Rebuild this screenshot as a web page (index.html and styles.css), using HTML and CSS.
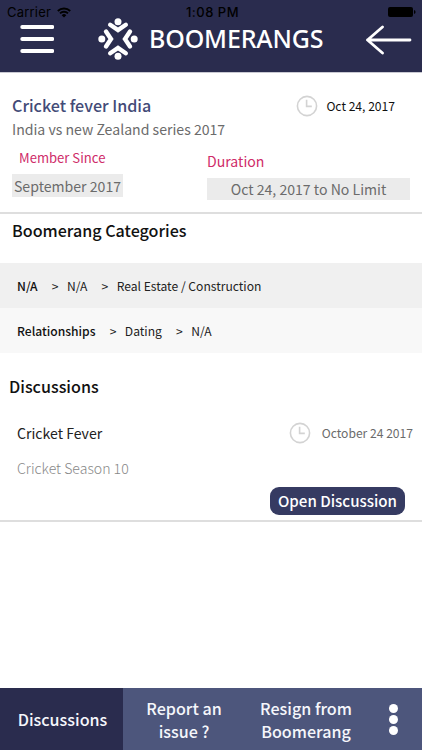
FILE: index.html
```html
<!DOCTYPE html>
<html lang="en">
<head>
    <meta charset="UTF-8">
    <meta name="viewport" content="width=device-width, initial-scale=1.0">
    <title>Boomerangs</title>
    <link rel="stylesheet" href="styles.css">
</head>
<body>
<header class="header">
    <div class="status-bar">
        <div class="carrier">
            <span>Carrier</span>
            <svg class="wifi" width="14" height="11" viewBox="0 0 14 11" fill="none" stroke="#000" stroke-width="1.9">
                <path d="M.8 4a8.8 8.8 0 0 1 12.4 0"/>
                <path d="M3 6.4a5.6 5.6 0 0 1 8 0"/>
                <path d="M7 10.6L4.7 8.3a3.2 3.2 0 0 1 4.6 0z" fill="#000" stroke="none"/>
            </svg>
        </div>
        <span class="time">1:08 PM</span>
        <svg class="battery" width="28" height="10" viewBox="0 0 28 10">
            <rect x="0" y="0" width="25" height="10" rx="2" fill="#000"/>
            <path d="M26 3v4q1.6-.6 1.6-2T26 3z" fill="#000"/>
        </svg>
    </div>
    <div class="nav-bar">
        <svg class="menu-icon" width="34" height="30" viewBox="0 0 34 30" stroke="#fff" stroke-width="3.8" stroke-linecap="round">
            <path d="M2.2 3h30.2M2.2 15h30.2M2.2 27h30.2"/>
        </svg>
        <div class="brand">
            <svg class="logo" width="40" height="42" viewBox="-20 -21 40 42">
                <g fill="none" stroke="#fff" stroke-width="4.4" stroke-linecap="round" stroke-linejoin="miter">
                    <path d="M-7.8 -14.2L0 -8.9L7.8 -14.2"/>
                    <path d="M-7.8 14.2L0 8.9L7.8 14.2"/>
                    <path d="M-12 -7.4L-7 0L-12 7.4"/>
                    <path d="M12 -7.4L7 0L12 7.4"/>
                </g>
                <g fill="#fff">
                    <circle cx="0" cy="-17.2" r="3.5"/>
                    <circle cx="0" cy="17.2" r="3.5"/>
                    <circle cx="-16.2" cy="0" r="3.5"/>
                    <circle cx="16.2" cy="0" r="3.5"/>
                </g>
            </svg>
            <h1>BOOMERANGS</h1>
        </div>
        <svg class="back-icon" width="46" height="30" viewBox="0 0 46 30" fill="none" stroke="#fff" stroke-width="2.8" stroke-linecap="round" stroke-linejoin="round">
            <path d="M44 15H1.5M16.5 2L1.5 15l15 13"/>
        </svg>
    </div>
</header>

<main class="content">
    <section class="summary">
        <div class="summary-top">
            <h2>Cricket fever India</h2>
            <div class="date">
                <svg class="clock" width="22" height="22" viewBox="0 0 22 22" fill="none" stroke="#d3d3d3" stroke-width="1.6">
                    <circle cx="11" cy="11" r="9.6"/>
                    <path d="M10.6 4.8v6.6h5.2"/>
                </svg>
                <span>Oct 24, 2017</span>
            </div>
        </div>
        <p class="subtitle">India vs new Zealand series 2017</p>
        <div class="details">
            <div class="member">
                <span class="label">Member Since</span>
                <span class="value">September 2017</span>
            </div>
            <div class="duration">
                <span class="label">Duration</span>
                <span class="value">Oct 24, 2017 to No Limit</span>
            </div>
        </div>
    </section>

    <section class="categories">
        <h3>Boomerang Categories</h3>
        <div class="category">
            <b>N/A</b><i>&gt;</i><span>N/A</span><i>&gt;</i><span>Real Estate / Construction</span>
        </div>
        <div class="category light">
            <b>Relationships</b><i>&gt;</i><span>Dating</span><i>&gt;</i><span>N/A</span>
        </div>
    </section>

    <section class="discussions">
        <h3>Discussions</h3>
        <div class="discussion-top">
            <span class="discussion-title">Cricket Fever</span>
            <div class="date muted">
                <svg class="clock" width="22" height="22" viewBox="0 0 22 22" fill="none" stroke="#d3d3d3" stroke-width="1.6">
                    <circle cx="11" cy="11" r="9.6"/>
                    <path d="M10.6 4.8v6.6h5.2"/>
                </svg>
                <span>October 24 2017</span>
            </div>
        </div>
        <p class="discussion-text">Cricket Season 10</p>
        <button class="open-btn">Open Discussion</button>
    </section>
</main>

<footer class="tabs">
    <a class="tab active">Discussions</a>
    <a class="tab">Report an<br>issue ?</a>
    <a class="tab">Resign from<br>Boomerang</a>
    <div class="more">
        <span></span>
        <span></span>
        <span></span>
    </div>
</footer>
</body>
</html>
```
FILE: styles.css
```css
:root {
    --navy: #2a2c4e;
    --navy-light: #4d567c;
    --pink: #cf2c69;
    --line: #dedede;
}

* {
    margin: 0;
    padding: 0;
    box-sizing: border-box;
}

body {
    height: 750px;
    display: flex;
    flex-direction: column;
    overflow: hidden;
    background: #fff;
    font-family: 'Noto Sans CJK SC', 'Open Sans', sans-serif;
    white-space: nowrap;
}

/* header */
.header {
    height: 73px;
    background: var(--navy);
    border-bottom: 1px solid #c9c9d2;
}

.status-bar {
    height: 24px;
    padding: 0 6px 0 7px;
    display: grid;
    grid-template-columns: 1fr auto 1fr;
    align-items: center;
    font-family: Inter, 'Liberation Sans', sans-serif;
    font-size: 13px;
    line-height: 24px;
    letter-spacing: 0.2px;
    color: #000;
}

.carrier {
    display: flex;
    align-items: center;
    gap: 6px;
}

.time {
    padding-left: 2px;
    font-weight: 500;
    letter-spacing: 0.5px;
}

.battery {
    justify-self: end;
}

.nav-bar {
    height: 30px;
    padding: 0 10px 0 20px;
    display: flex;
    align-items: center;
}

.brand {
    display: flex;
    align-items: center;
    gap: 11px;
    margin-left: 44px;
}

.brand h1 {
    margin-top: -2px;
    font-family: 'Noto Sans', 'Open Sans', sans-serif;
    font-size: 25px;
    font-weight: 500;
    line-height: 30px;
    letter-spacing: -0.15px;
    color: #fff;
}

.back-icon {
    margin-left: auto;
    margin-top: 2px;
}

/* summary */
.content {
    flex: 1;
}

.summary {
    height: 141px;
    padding: 21px 12px 0 12px;
    border-bottom: 2px solid var(--line);
}

.summary-top,
.discussion-top {
    display: flex;
    justify-content: space-between;
    align-items: center;
    height: 24px;
}

.summary h2 {
    margin-top: -2px;
    font-size: 16.1px;
    font-weight: 500;
    color: #434b77;
}

.date {
    display: flex;
    align-items: center;
    gap: 8px;
    font-size: 12.1px;
    color: #111;
}

.summary .date {
    margin-right: 15px;
}

.date span {
    margin-top: -1px;
}

.subtitle {
    font-size: 14.1px;
    line-height: 22px;
    color: #6b6b6b;
}

.details {
    display: flex;
    justify-content: space-between;
    margin-top: 8px;
}

.details span {
    display: block;
}

.label {
    font-size: 13.1px;
    line-height: 20px;
    color: var(--pink);
}

.member .label {
    padding-left: 7px;
}

.duration {
    width: 203px;
    padding-top: 3px;
}

.duration .label {
    font-size: 14.1px;
}

.value {
    margin-top: 7px;
    height: 22px;
    line-height: 22px;
    font-size: 14.1px;
    text-align: center;
    color: #6b6b6b;
    background: #ebebeb;
}

.member .value {
    width: 111px;
    margin-top: 6px;
    height: 23px;
    line-height: 24px;
}

/* categories */
h3 {
    font-size: 16.1px;
    font-weight: 500;
    line-height: 24px;
    color: #111;
}

.categories h3 {
    height: 49px;
    padding: 4px 12px 0;
}

.category {
    display: flex;
    align-items: center;
    height: 45px;
    padding-left: 17px;
    font-size: 12.1px;
    color: #222;
    background: #f0f0f0;
}

.category.light {
    background: #f8f8f8;
}

.category b {
    font-weight: 500;
    color: #111;
}

.category i {
    font-style: normal;
    margin: 0 8.5px 0 14.2px;
}

/* discussions */
.discussions {
    padding: 21px 9px 0;
    height: 169px;
    border-bottom: 2px solid var(--line);
    display: flex;
    flex-direction: column;
}

.discussion-top {
    margin-top: 23px;
    padding: 0 0 0 8px;
}

.discussion-title {
    margin-top: -1px;
    font-size: 14.1px;
    color: #222;
}

.date.muted {
    gap: 11px;
    color: #6b6b6b;
}

.discussion-text {
    margin-top: 12px;
    padding-left: 8px;
    font-size: 14.1px;
    font-weight: 300;
    line-height: 22px;
    color: #888;
}

.open-btn {
    align-self: flex-end;
    width: 135px;
    height: 28px;
    margin: 8px 8px 0 0;
    padding-bottom: 2px;
    border: none;
    border-radius: 9px;
    background: #363b62;
    color: #fff;
    font-family: inherit;
    font-size: 15.1px;
    font-weight: 500;
    line-height: 26px;
}

/* bottom tabs */
.tabs {
    display: flex;
    height: 62px;
    background: var(--navy-light);
}

.tab {
    display: flex;
    align-items: center;
    justify-content: center;
    width: 122px;
    padding-top: 1px;
    text-align: center;
    font-size: 16.1px;
    font-weight: 500;
    line-height: 22.5px;
    color: #f5f6fb;
}

.active {
    width: 123px;
    padding-left: 2px;
    background: var(--navy);
}

.more {
    flex: 1;
    display: flex;
    flex-direction: column;
    align-items: center;
    justify-content: center;
    gap: 2px;
    padding-right: 2px;
}

.more span {
    width: 9px;
    height: 9px;
    border-radius: 50%;
    background: #fff;
}
```
